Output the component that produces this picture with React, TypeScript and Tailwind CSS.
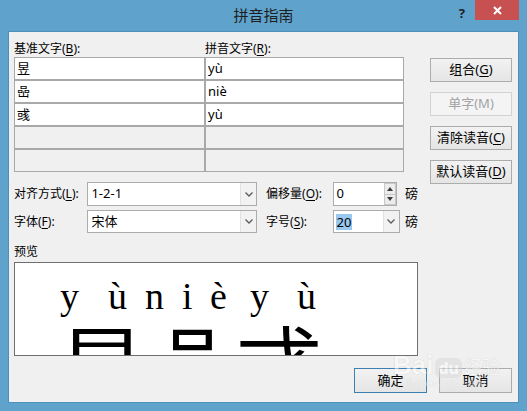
import React from "react";

const uiFont = { fontFamily: '"Noto Sans", "Noto Sans CJK SC", sans-serif' };

function Acc({ k }: { k: string }) {
  return <span className="underline underline-offset-[2px]">{k}</span>;
}

function Chevron() {
  return (
    <svg width="8" height="5" viewBox="0 0 8 5" className="text-[#5a5a5a]">
      <path d="M0.5 0.5 L4 4 L7.5 0.5" fill="none" stroke="currentColor" strokeWidth="1.3" />
    </svg>
  );
}

function Combo({ value, width, selected }: { value: string; width: string; selected?: boolean }) {
  return (
    <div className={`${width} h-full flex border border-[#acacac] bg-white`}>
      <div className="flex-1 flex items-center pl-[2px] text-[13px] text-black">
        {selected ? <span className="bg-[#99c9ef] px-[1px] leading-[16px]">{value}</span> : <span className="pl-[1px]">{value}</span>}
      </div>
      <div className="w-[16px] flex items-center justify-center bg-[#f2f2f2] border-l border-[#e2e2e2]">
        <Chevron />
      </div>
    </div>
  );
}

function Spinner({ value }: { value: string }) {
  return (
    <div className="w-[65px] h-full flex border border-[#acacac] bg-white">
      <div className="flex-1 flex items-center pl-[3px] text-[13px]">{value}</div>
      <div className="w-[12px] flex flex-col">
        <div className="flex-1 flex items-center justify-center bg-[#ececec] border border-[#c8c8c8]">
          <svg width="6" height="4" viewBox="0 0 6 4"><path d="M0 4 L3 0 L6 4Z" fill="#3c3c3c" /></svg>
        </div>
        <div className="flex-1 flex items-center justify-center bg-[#ececec] border border-t-0 border-[#c8c8c8]">
          <svg width="6" height="4" viewBox="0 0 6 4"><path d="M0 0 L3 4 L6 0Z" fill="#3c3c3c" /></svg>
        </div>
      </div>
    </div>
  );
}

function Btn({ children, disabled, primary }: { children: React.ReactNode; disabled?: boolean; primary?: boolean }) {
  const border = primary ? "border-[#3c7fb1]" : disabled ? "border-[#d2d2d2]" : "border-[#acacac]";
  const bg = disabled ? "bg-[#f4f4f4]" : "bg-gradient-to-b from-[#f2f2f2] to-[#e5e5e5]";
  return (
    <div className={`w-full h-full flex items-center justify-center border ${border} ${bg} text-[13px] ${disabled ? "text-[#a3a3a3]" : "text-black"}`}>
      {children}
    </div>
  );
}

const rows = [
  { base: "昱", py: "yù" },
  { base: "喦", py: "niè" },
  { base: "彧", py: "yù" },
  { base: "", py: "" },
  { base: "", py: "" },
];

const pinyin = [
  { c: "y", x: 45 },
  { c: "ù", x: 93 },
  { c: "n", x: 130 },
  { c: "i", x: 167 },
  { c: "è", x: 195 },
  { c: "y", x: 235 },
  { c: "ù", x: 282 },
];

const hanzi = [
  { c: "昱", x: 45 },
  { c: "喦", x: 135 },
  { c: "彧", x: 222 },
];

export default function App() {
  return (
    <div className="w-[527px] h-[411px] bg-[#5fa2cc] flex flex-col overflow-hidden" style={uiFont}>
      {/* title bar */}
      <div className="h-[31px] grid grid-cols-[1fr_auto_1fr]">
        <div />
        <div className="flex items-center text-[15px] text-[#1e1e1e] pb-[1px]">拼音指南</div>
        <div className="flex justify-end items-start">
          <span className="mt-[4px] mr-[10px] text-[13px] font-bold text-[#202020]">?</span>
          <div className="w-[44px] h-[20px] mr-[8px] bg-[#c75050] flex items-center justify-center">
            <svg width="9" height="9" viewBox="0 0 9 9">
              <path d="M1 1 L8 8 M8 1 L1 8" stroke="white" strokeWidth="2" />
            </svg>
          </div>
        </div>
      </div>

      {/* client area */}
      <div className="ml-[8px] w-[511px] h-[372px] bg-[#f0f0f0] border border-[#4e8fba] flex flex-col pl-[5px] pr-[6px] text-[12px] text-black">
        <div className="flex">
          {/* left column */}
          <div className="w-[404px] flex flex-col pt-[8px]">
            <div className="h-[17px] flex items-center">
              <span className="w-[191px]">基准文字(<Acc k="B" />):</span>
              <span>拼音文字(<Acc k="R" />):</span>
            </div>
            <div className="w-[390px] grid grid-cols-[191px_199px]">
              {rows.map((r, i) => (
                <React.Fragment key={i}>
                  <div className={`h-[23px] border border-[#a9a9a9] flex items-center pl-[2px] text-[13px] ${i < 3 ? "bg-white" : "bg-[#f0f0f0]"}`}>{r.base}</div>
                  <div className={`h-[23px] border border-[#a9a9a9] flex items-center pl-[2px] text-[13px] ${i < 3 ? "bg-white" : "bg-[#f0f0f0]"}`}>{r.py}</div>
                </React.Fragment>
              ))}
            </div>

            <div className="mt-[10px] h-[24px] flex items-center">
              <span className="w-[74px]">对齐方式(<Acc k="L" />):</span>
              <Combo value="1-2-1" width="w-[171px]" />
              <span className="ml-[9px] w-[67px]">偏移量(<Acc k="O" />):</span>
              <Spinner value="0" />
              <span className="ml-[8px] text-[13px]">磅</span>
            </div>
            <div className="mt-[4px] h-[23px] flex items-center">
              <span className="w-[74px]">字体(<Acc k="F" />):</span>
              <Combo value="宋体" width="w-[171px]" />
              <span className="ml-[9px] w-[67px]">字号(<Acc k="S" />):</span>
              <Combo value="20" width="w-[68px]" selected />
              <span className="ml-[5px] text-[13px]">磅</span>
            </div>

            <div className="mt-[10px] h-[17px] flex items-center">预览</div>
            <div className="mt-[2px] w-[404px] h-[94px] bg-white border border-[#6e6e6e] relative overflow-hidden">
              {pinyin.map((p, i) => (
                <span
                  key={i}
                  className="absolute top-[14px] text-[38px] leading-[38px] text-black"
                  style={{ left: p.x, fontFamily: '"Liberation Serif", serif' }}
                >
                  {p.c}
                </span>
              ))}
              {hanzi.map((h, i) => (
                <span
                  key={i}
                  className="absolute top-[56px] text-[84px] leading-[84px] text-black"
                  style={{ left: h.x, fontFamily: '"Noto Sans CJK SC", sans-serif' }}
                >
                  {h.c}
                </span>
              ))}
            </div>
          </div>

          {/* right buttons */}
          <div className="ml-auto w-[82px] pt-[26px] flex flex-col gap-[10px]">
            <div className="h-[24px]"><Btn>组合(<Acc k="G" />)</Btn></div>
            <div className="h-[24px]"><Btn disabled>单字(M)</Btn></div>
            <div className="h-[24px]"><Btn>清除读音(<Acc k="C" />)</Btn></div>
            <div className="h-[24px]"><Btn>默认读音(<Acc k="D" />)</Btn></div>
          </div>
        </div>

        {/* bottom buttons */}
        <div className="mt-[12px] h-[25px] flex justify-end gap-[12px] relative">
          <div className="w-[73px]"><Btn primary>确定</Btn></div>
          <div className="w-[73px]"><Btn>取消</Btn></div>
          <div className="absolute right-[12px] top-[-16px] flex flex-col items-center opacity-50 pointer-events-none">
            <div className="flex items-end gap-[2px]">
              <span className="text-[26px] leading-[26px] font-bold text-white [text-shadow:0_0_1px_#9a9a9a]" style={{ fontFamily: '"Liberation Sans", sans-serif' }}>Bai</span>
              <span className="px-[3px] rounded-[6px] bg-[#d8d8d8] text-white text-[16px] leading-[20px] font-bold">du</span>
              <span className="text-[18px] leading-[22px] text-white [text-shadow:0_0_1px_#9a9a9a]">经验</span>
            </div>
            <span className="text-[9px] leading-[10px] text-white [text-shadow:0_0_1px_#b0b0b0]">jingyan.baidu.com</span>
          </div>
        </div>
      </div>
    </div>
  );
}
